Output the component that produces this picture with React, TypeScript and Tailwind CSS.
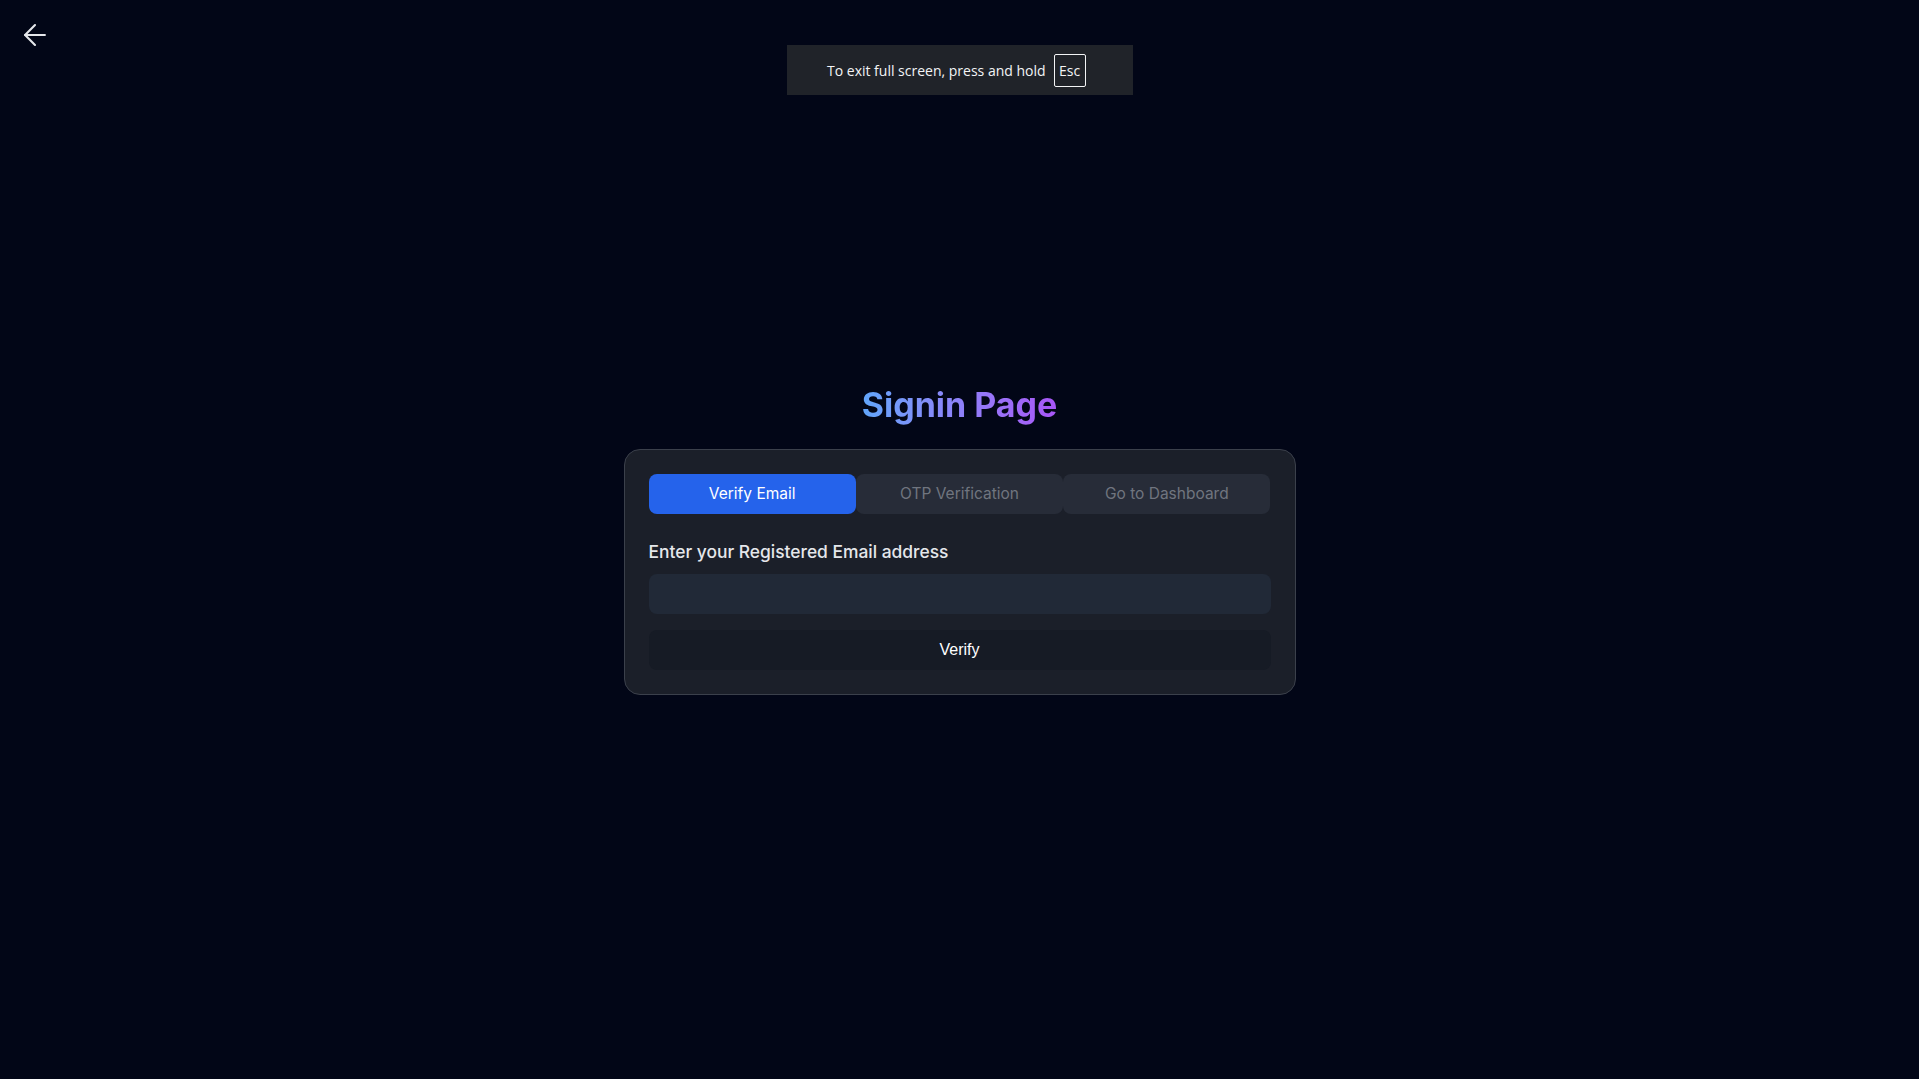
import React, { useState } from 'react';
import { ArrowLeft } from 'lucide-react';

const tabs = ['Verify Email', 'OTP Verification', 'Go to Dashboard'];

export default function App() {
  const [active, setActive] = useState(0);
  const [email, setEmail] = useState('');

  return (
    <div className="relative min-h-screen bg-[#020617] flex items-center justify-center font-['Inter',sans-serif]">
      <button className="absolute left-[18px] top-[18px] text-gray-200">
        <ArrowLeft size={34} strokeWidth={1.5} />
      </button>

      <div className="absolute left-[787px] top-[45px] w-[346px] h-[50px] bg-[#202329] flex items-center pl-[40px] gap-2 font-['Open_Sans',sans-serif] text-[14px] text-gray-100">
        <span>To exit full screen, press and hold</span>
        <span className="border border-gray-100 rounded-[2px] w-[32px] h-[33px] flex items-center justify-center">Esc</span>
      </div>

      <div className="w-[672px] flex flex-col items-center">
        <h1 className="text-[34px] leading-10 font-bold bg-gradient-to-r from-[#60a5fa] to-[#a855f7] bg-clip-text text-transparent mb-6">
          Signin Page
        </h1>

        <div className="w-full bg-[#1b1f29] border border-[#3b404b] rounded-2xl p-6">
          <div className="grid grid-cols-3">
            {tabs.map((t, i) => (
              <button
                key={t}
                onClick={() => setActive(i)}
                className={`h-10 rounded-lg text-[15.5px] ${i === active ? 'bg-[#2563eb] text-white' : 'bg-[#272c38] text-[#70757f]'}`}
              >
                {t}
              </button>
            ))}
          </div>

          <label className="block mt-6 mb-2 text-[17.4px] leading-7 font-medium text-gray-200">
            Enter your Registered Email address
          </label>
          <input
            value={email}
            onChange={e => setEmail(e.target.value)}
            className="w-full h-10 rounded-lg bg-[#212937] px-3 text-gray-100 outline-none"
          />
          <button className="w-full h-10 mt-4 rounded-lg bg-[#161b25] text-white text-base font-['Liberation_Sans',sans-serif]">
            Verify
          </button>
        </div>
      </div>
    </div>
  );
}
